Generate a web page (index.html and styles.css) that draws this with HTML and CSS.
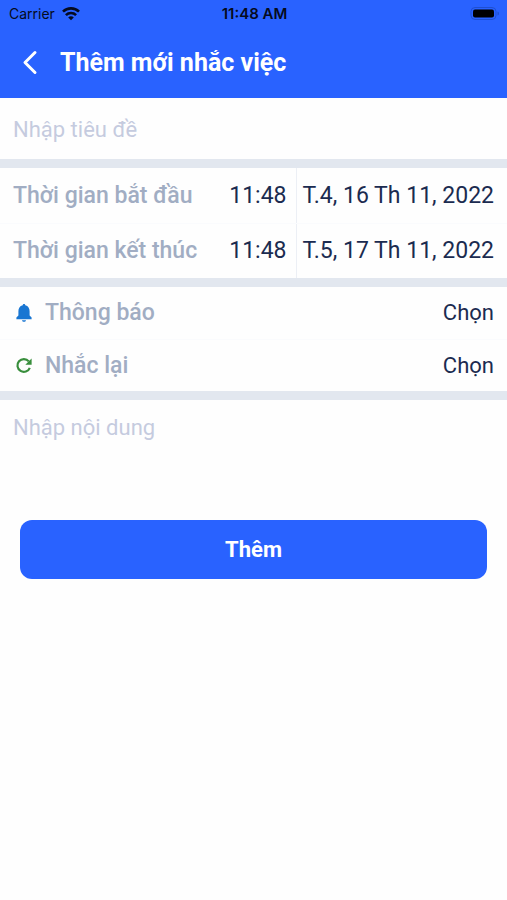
FILE: index.html
```html
<!DOCTYPE html>
<html lang="vi">
<head>
<meta charset="utf-8">
<meta name="viewport" content="width=device-width, initial-scale=1">
<title>Thêm mới nhắc việc</title>
<link rel="stylesheet" href="styles.css">
</head>
<body>
<header class="header">
  <div class="status">
    <div class="carrier">
      <span>Carrier</span>
      <svg class="wifi" viewBox="0 0 18 14" aria-hidden="true">
        <path d="M1 4.700C5.400.300 12.600.300 17 4.700" />
        <path d="M3.900 8.100C6.800 5.300 11.200 5.300 14.100 8.100" />
        <path class="wifi-dot" d="M9 13.300 6.200 10.500C7.800 8.900 10.200 8.900 11.800 10.500Z" />
      </svg>
    </div>
    <span class="clock">11:48 AM</span>
    <svg class="battery" viewBox="0 0 30 14" aria-hidden="true">
      <rect class="battery-case" x="1" y="0.500" width="25" height="12" rx="4" />
      <rect x="3" y="2.500" width="21" height="8" rx="2" />
      <path class="battery-tip" d="M27.500 4.500C29.500 5.100 29.500 7.900 27.500 8.500Z" />
    </svg>
  </div>
  <div class="navbar">
    <button class="back" type="button" aria-label="Quay lại">
      <svg viewBox="0 0 16 26" aria-hidden="true"><path d="M13 2.500 3 12.500 13 22.500" /></svg>
    </button>
    <h1 class="title">Thêm mới nhắc việc</h1>
  </div>
</header>
<form class="form">
  <input class="field field-title" type="text" placeholder="Nhập tiêu đề" aria-label="Tiêu đề">
  <section class="group">
    <div class="row row-time">
      <span class="label" id="start">Thời gian bắt đầu</span>
      <button class="value time" type="button" aria-describedby="start">11:48</button>
      <button class="value date" type="button" aria-describedby="start">T.4, 16 Th 11, 2022</button>
    </div>
    <div class="row row-time">
      <span class="label" id="end">Thời gian kết thúc</span>
      <button class="value time" type="button" aria-describedby="end">11:48</button>
      <button class="value date" type="button" aria-describedby="end">T.5, 17 Th 11, 2022</button>
    </div>
  </section>
  <section class="group">
    <div class="row row-option">
      <svg class="icon bell" viewBox="0 0 20 20" aria-hidden="true">
        <path d="M10 1C9.200 1 8.800 1.500 8.700 2.200 5.700 2.900 4.400 5.300 4.400 8.200V12.600L2.400 14.600V16.200H17.600V14.600L15.600 12.600V8.200C15.600 5.300 14.300 2.900 11.300 2.200 11.200 1.500 10.800 1 10 1ZM8 17.200C8.300 19.300 11.700 19.300 12 17.200Z" />
      </svg>
      <span class="label" id="notify">Thông báo</span>
      <button class="value pick" type="button" aria-describedby="notify">Chọn</button>
    </div>
    <div class="row row-option">
      <svg class="icon repeat" viewBox="0 0 20 20" aria-hidden="true">
        <path class="repeat-arc" d="M15.800 11.800A6.400 6.400 0 1 1 14.800 5.400" />
        <path d="M17.600 2.400V8.700H11.300Z" />
      </svg>
      <span class="label" id="repeat">Nhắc lại</span>
      <button class="value pick" type="button" aria-describedby="repeat">Chọn</button>
    </div>
  </section>
  <textarea class="field field-content" placeholder="Nhập nội dung" aria-label="Nội dung"></textarea>
  <button class="submit" type="submit">Thêm</button>
</form>
</body>
</html>
```
FILE: styles.css
```css
* {
  box-sizing: border-box;
}

body {
  margin: 0;
  background: #fefefe;
  color: #1b2b50;
  font-family: Roboto, "Liberation Sans", sans-serif;
  font-size: 22px;
  line-height: 28px;
}

button,
input,
textarea {
  margin: 0;
  padding: 0;
  border: 0;
  background: none;
  color: inherit;
  font: inherit;
}

.header {
  background: #2962ff;
  color: #fff;
}

.status {
  display: grid;
  grid-template-columns: 1fr auto 1fr;
  align-items: center;
  height: 28px;
  padding: 0 7px 0 9px;
  color: #050b20;
  font-family: Inter, sans-serif;
  font-size: 14px;
  line-height: 20px;
}

.carrier {
  display: flex;
  align-items: center;
  gap: 7px;
}

.wifi {
  width: 18px;
  height: 14px;
  fill: none;
  stroke: currentColor;
  stroke-width: 2.6;
}

.wifi-dot {
  fill: currentColor;
  stroke: none;
}

.clock {
  font-size: 15px;
  font-weight: 600;
}

.battery {
  justify-self: end;
  width: 30px;
  height: 14px;
}

.battery-case {
  fill: none;
  stroke: #1f4fd0;
}

.battery-tip {
  fill: #1f4fd0;
}

.navbar {
  display: flex;
  align-items: center;
  gap: 22px;
  height: 70px;
  padding: 0 22px;
}

.back {
  display: flex;
}

.back svg {
  width: 16px;
  height: 26px;
  fill: none;
  stroke: currentColor;
  stroke-width: 3;
  stroke-linecap: round;
  stroke-linejoin: round;
}

.title {
  margin: 0;
  font-size: 25px;
  font-weight: 700;
}

.form {
  display: flex;
  flex-direction: column;
}

.field {
  padding: 0 13px;
  outline: 0;
  resize: none;
}

.field::placeholder {
  color: #c5cbdf;
  opacity: 1;
}

.field-title {
  height: 61px;
  padding-top: 1px;
}

.group {
  border-top: 9px solid #e2e7ef;
}

.row {
  display: flex;
  align-items: center;
  padding: 0 13px;
}

.row + .row {
  border-top: 1px solid #fafbfd;
}

.label {
  flex: 1;
  color: #a1adc3;
  font-size: 23px;
  font-weight: 500;
}

.row-time {
  height: 55px;
}

.time,
.date {
  font-size: 23px;
}

.time {
  padding-right: 9px;
}

.date {
  align-self: stretch;
  padding-left: 6px;
  border-left: 1px solid #eceff5;
}

.row-option {
  height: 52px;
}

.icon {
  width: 20px;
  height: 20px;
  margin: 0 11px 0 1px;
}

.bell {
  fill: #1976d2;
}

.repeat {
  fill: #388e3c;
}

.repeat-arc {
  fill: none;
  stroke: #388e3c;
  stroke-width: 2.2;
}

.field-content {
  height: 120px;
  padding-top: 14px;
  border-top: 9px solid #e2e7ef;
}

.submit {
  height: 59px;
  margin: 9px 20px 0;
  border-radius: 12px;
  background: #2962ff;
  color: #fff;
  font-weight: 700;
}
```
